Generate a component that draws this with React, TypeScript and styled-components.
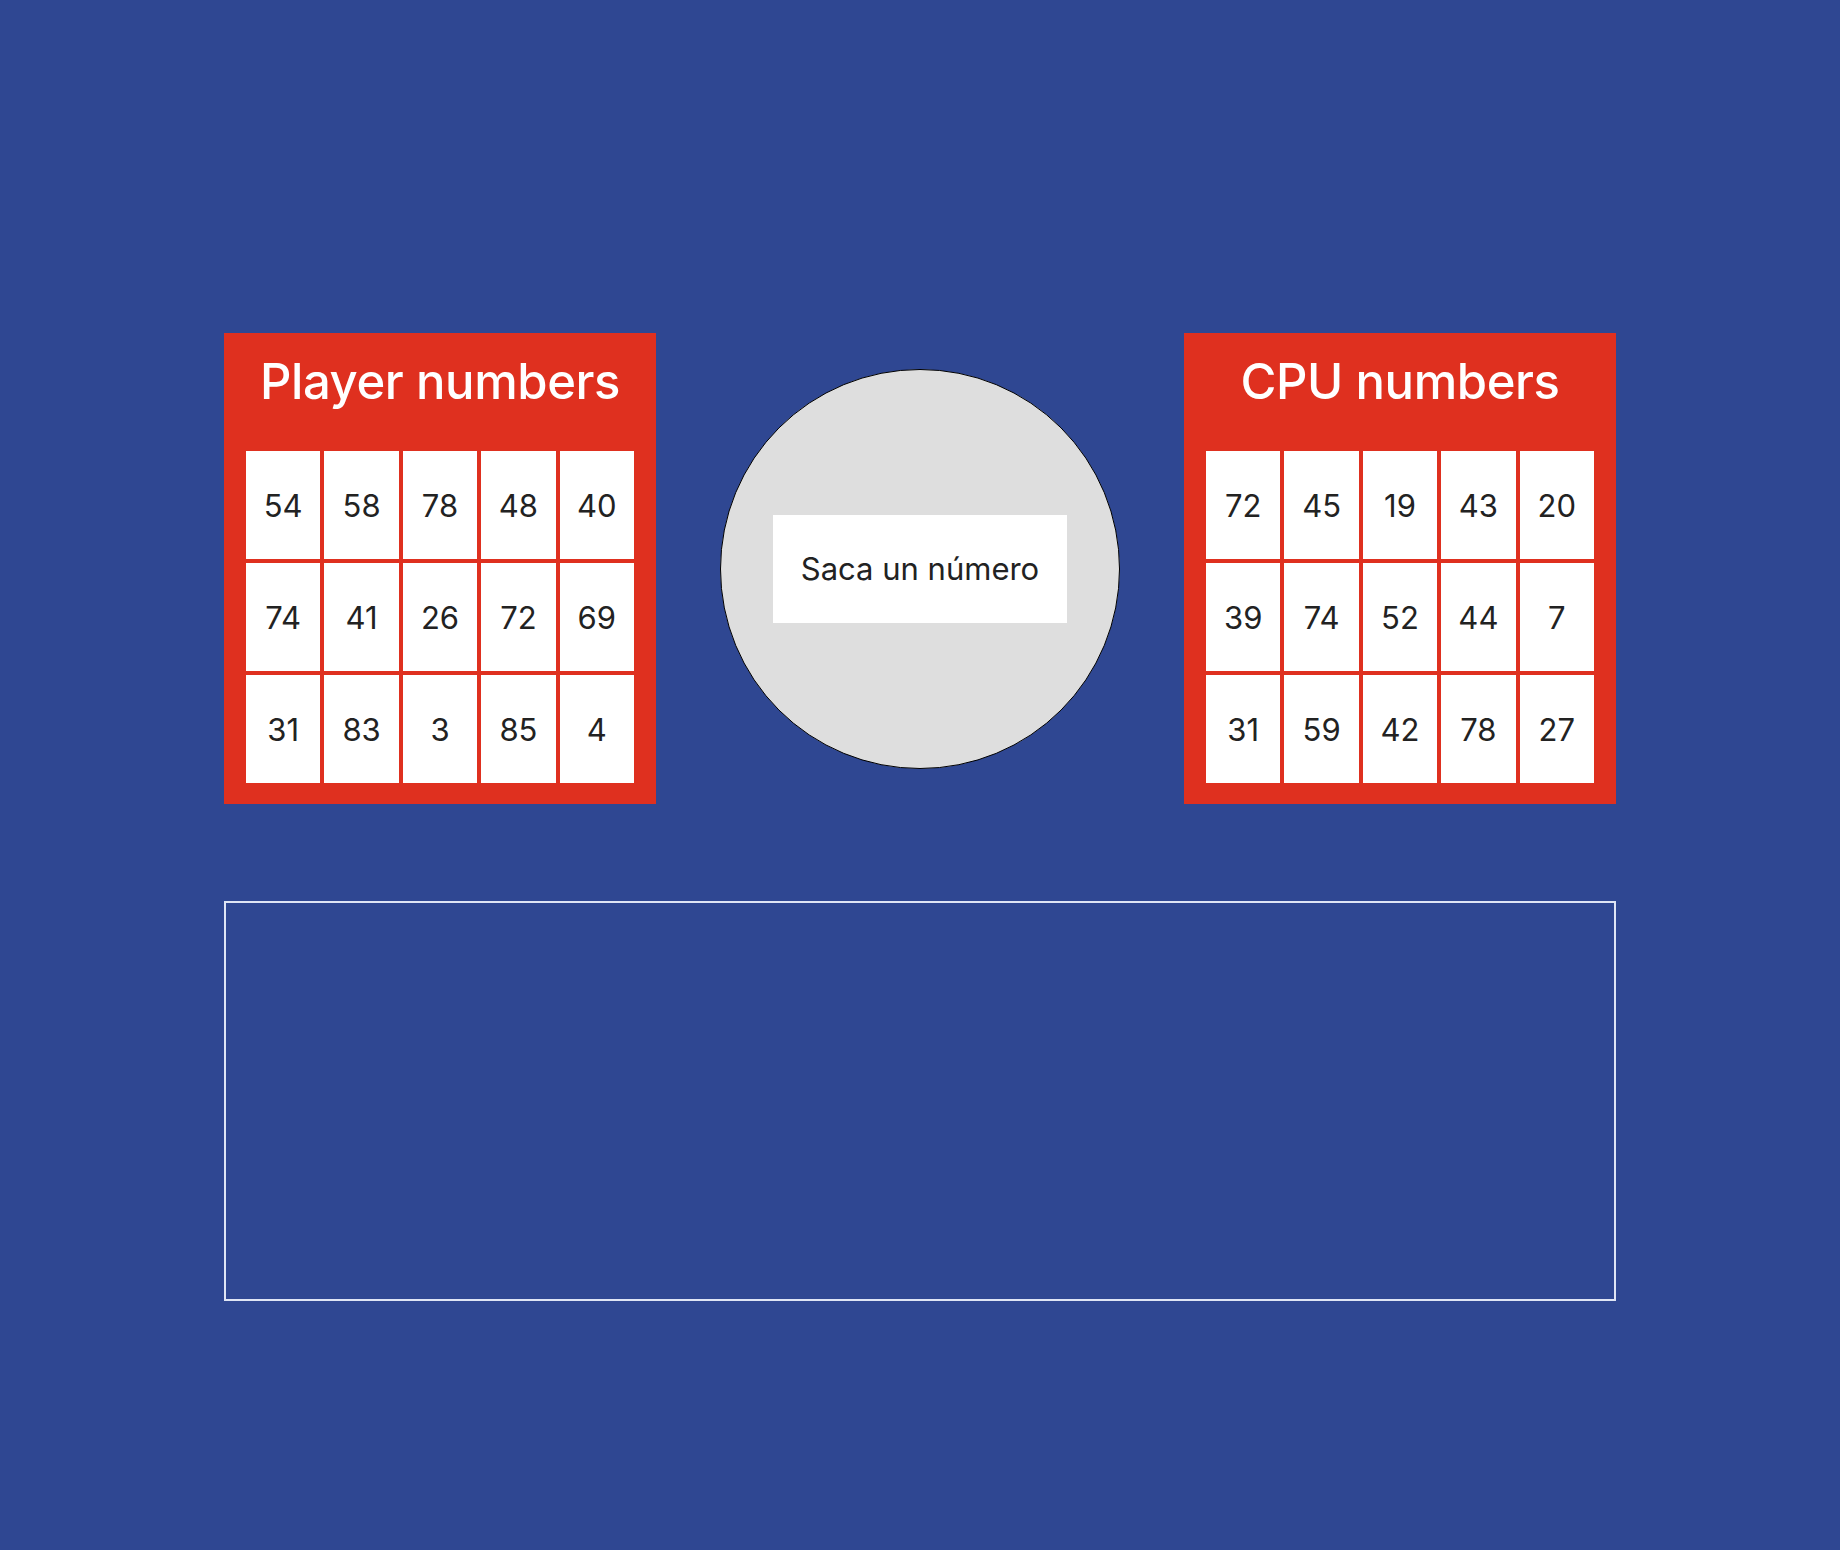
import React from "react";
import styled, { createGlobalStyle } from "styled-components";

const GlobalStyle = createGlobalStyle`
  html, body {
    margin: 0;
    padding: 0;
    background: #2f4792;
    font-family: Inter, "Noto Sans", "Liberation Sans", sans-serif;
  }
  * { box-sizing: border-box; }
`;

const Page = styled.main`
  min-height: 1550px;
  padding-top: 333px;
  display: flex;
  flex-direction: column;
  align-items: center;
  gap: 97px;
`;

const Board = styled.section`
  display: flex;
  align-items: center;
  gap: 64px;
`;

const Card = styled.div`
  width: 432px;
  background: #df301f;
  padding: 19px 22px 21px;
  display: flex;
  flex-direction: column;
`;

const Title = styled.h2`
  margin: 0;
  font-size: 49px;
  line-height: 60px;
  font-weight: 500;
  color: #ffffff;
  text-align: center;
  letter-spacing: -0.4px;
`;

const Grid = styled.div`
  margin-top: 39px;
  display: grid;
  grid-template-columns: repeat(5, 1fr);
  grid-auto-rows: 108px;
  gap: 4px;
`;

const Cell = styled.div`
  background: #ffffff;
  display: flex;
  align-items: center;
  justify-content: center;
  font-size: 31px;
  color: #222222;
`;

const Drum = styled.div`
  width: 400px;
  height: 400px;
  border-radius: 50%;
  border: 1.5px solid #000000;
  background: #dedede;
  display: flex;
  align-items: center;
  justify-content: center;
`;

const DrawButton = styled.button`
  width: 294px;
  height: 108px;
  border: none;
  background: #ffffff;
  font-family: inherit;
  font-size: 31px;
  color: #222222;
  cursor: pointer;
`;

const Log = styled.div`
  width: 1392px;
  height: 400px;
  border: 2px solid #dfe5f5;
`;

const player = [54, 58, 78, 48, 40, 74, 41, 26, 72, 69, 31, 83, 3, 85, 4];
const cpu = [72, 45, 19, 43, 20, 39, 74, 52, 44, 7, 31, 59, 42, 78, 27];

const NumberCard = ({ title, numbers }: { title: string; numbers: number[] }) => (
  <Card>
    <Title>{title}</Title>
    <Grid>
      {numbers.map((n, i) => (
        <Cell key={i}>{n}</Cell>
      ))}
    </Grid>
  </Card>
);

export default function App() {
  return (
    <>
      <GlobalStyle />
      <Page>
        <Board>
          <NumberCard title="Player numbers" numbers={player} />
          <Drum>
            <DrawButton>Saca un número</DrawButton>
          </Drum>
          <NumberCard title="CPU numbers" numbers={cpu} />
        </Board>
        <Log />
      </Page>
    </>
  );
}
